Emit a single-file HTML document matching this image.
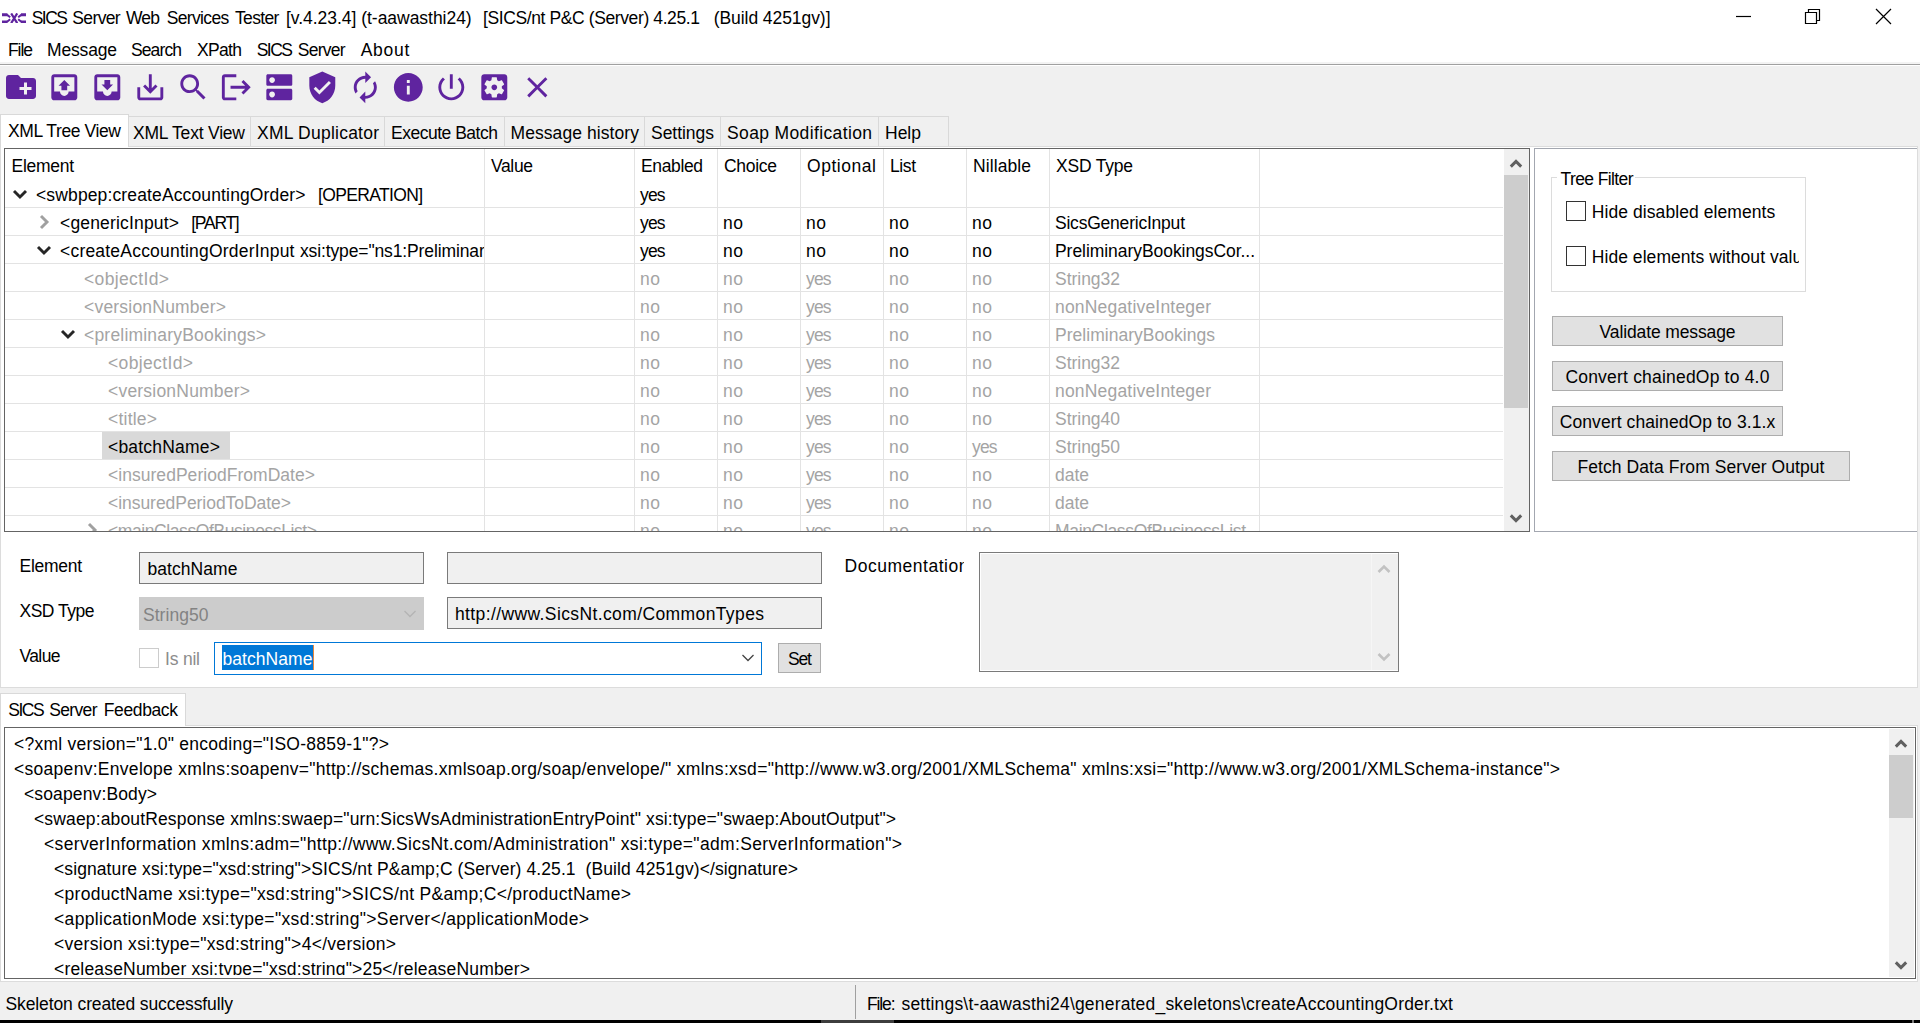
<!DOCTYPE html>
<html lang="en"><head><meta charset="utf-8"><title>SICS Server Web Services Tester</title>
<style>
html,body{margin:0;padding:0}
body{width:1920px;height:1023px;position:relative;overflow:hidden;background:#f0f0f0;font-family:"Liberation Sans",sans-serif;font-size:17.5px;line-height:20px;color:#000}
.a{position:absolute}
.t{position:absolute;white-space:pre;height:20px}
.hl{position:absolute;height:1px;background:#e3e3e3}
.vl{position:absolute;width:1px;background:#e3e3e3}
.btn{position:absolute;box-sizing:border-box;height:30px;background:#e1e1e1;border:1px solid #adadad;text-align:center;line-height:31px;white-space:pre;overflow:hidden}
.tab{position:absolute;box-sizing:border-box;border:1px solid #d9d9d9;border-bottom:none;background:#f0f0f0}
.inp{position:absolute;box-sizing:border-box;border:1px solid #7a7a7a;background:#f0f0f0}
</style></head><body>
<div class="a" style="left:0;top:0;width:1920px;height:64px;background:#fff"></div>
<div class="a" style="left:0;top:62px;width:1920px;height:2px;background:#f3f3f3"></div>
<div class="a" style="left:0;top:64px;width:1920px;height:1px;background:#a0a0a0"></div>
<div class="a" style="left:0;top:65px;width:1920px;height:1px;background:#fff"></div>
<svg class="a" style="left:2px;top:12.6px" width="24.4" height="10.6" viewBox="0 0 24.4 10.6"><g fill="none" stroke="#5f249f"><path stroke-width="2.9" d="M0 1.7h5.4M0 8.9h5.4M24.4 1.7h-5.4M24.4 8.9h-5.4"/><path stroke-width="2" d="M4.8 1.6l3.4 2.7M4.8 9l3.4-2.7M19.6 1.6l-3.4 2.7M19.6 9l-3.4-2.7"/><path d="M9.2 0.4l6 9.8M15.2 0.4l-6 9.8" stroke-width="2.2"/></g></svg>
<svg class="a" style="left:1730px;top:4px" width="170" height="26" viewBox="0 0 170 26"><g fill="none" stroke="#000" stroke-width="1.2"><path d="M6 12.5h15"/><path d="M75.5 8.5h11v11h-11zM78.5 8.5v-3h11v11h-3"/><path d="M146 5l15 15M161 5l-15 15"/></g></svg>
<svg class="a" style="left:3.00px;top:69.00px" width="36" height="36" viewBox="0 0 24 24"><path fill="#5f249f" d="M20 6h-8l-2-2H4c-1.11 0-1.99.89-1.99 2L2 18c0 1.11.89 2 2 2h16c1.11 0 2-.89 2-2V8c0-1.11-.89-2-2-2zm-1 8h-3v3h-2v-3h-3v-2h3V9h2v3h3v2z"/></svg>
<svg class="a" style="left:46.70px;top:69.70px" width="34.6" height="34.6" viewBox="0 0 24 24"><path fill="#5f249f" d="M19 3H4.99c-1.11 0-1.98.9-1.98 2L3 19c0 1.1.88 2 1.99 2H19c1.1 0 2-.9 2-2V5c0-1.1-.9-2-2-2zm0 12h-4c0 1.66-1.35 3-3 3s-3-1.34-3-3H4.99V5H19v10zM8 11h2v3h4v-3h2l-4-4-4 4z"/></svg>
<svg class="a" style="left:89.70px;top:69.70px" width="34.6" height="34.6" viewBox="0 0 24 24"><path fill="#5f249f" d="M19 3H4.99c-1.11 0-1.98.9-1.98 2L3 19c0 1.1.88 2 1.99 2H19c1.1 0 2-.9 2-2V5c0-1.1-.9-2-2-2zm0 12h-4c0 1.66-1.35 3-3 3s-3-1.34-3-3H4.99V5H19v10zm-3-5h-2V7h-4v3H8l4 4 4-4z"/></svg>
<svg class="a" style="left:132.70px;top:69.70px" width="34.6" height="34.6" viewBox="0 0 24 24"><path fill="#5f249f" d="M19 12v7H5v-7H3v7c0 1.1.9 2 2 2h14c1.1 0 2-.9 2-2v-7h-2zm-6 .67l2.59-2.58L17 11.5l-5 5-5-5 1.41-1.41L11 12.67V3h2z"/></svg>
<svg class="a" style="left:175.70px;top:69.70px" width="34.6" height="34.6" viewBox="0 0 24 24"><path fill="#5f249f" d="M15.5 14h-.79l-.28-.27C15.41 12.59 16 11.11 16 9.5 16 5.91 13.09 3 9.5 3S3 5.91 3 9.5 5.91 16 9.5 16c1.61 0 3.09-.59 4.23-1.57l.27.28v.79l5 4.99L20.49 19l-4.99-5zm-6 0C7.01 14 5 11.99 5 9.5S7.01 5 9.5 5 14 7.01 14 9.5 11.99 14 9.5 14z"/></svg>
<svg class="a" style="left:218.70px;top:69.70px" width="34.6" height="34.6" viewBox="0 0 24 24"><path fill="#5f249f" d="M17 7l-1.41 1.41L18.17 11H8v2h10.17l-2.58 2.58L17 17l5-5zM4 5h8V3H4c-1.1 0-2 .9-2 2v14c0 1.1.9 2 2 2h8v-2H4V5z"/></svg>
<svg class="a" style="left:261.70px;top:69.70px" width="34.6" height="34.6" viewBox="0 0 24 24"><path fill="#5f249f" d="M20 13H4c-.55 0-1 .45-1 1v6c0 .55.45 1 1 1h16c.55 0 1-.45 1-1v-6c0-.55-.45-1-1-1zM7 19c-1.1 0-2-.9-2-2s.9-2 2-2 2 .9 2 2-.9 2-2 2zM20 3H4c-.55 0-1 .45-1 1v6c0 .55.45 1 1 1h16c.55 0 1-.45 1-1V4c0-.55-.45-1-1-1zM7 9c-1.1 0-2-.9-2-2s.9-2 2-2 2 .9 2 2-.9 2-2 2z"/></svg>
<svg class="a" style="left:304.70px;top:69.70px" width="34.6" height="34.6" viewBox="0 0 24 24"><path fill="#5f249f" d="M12 1L3 5v6c0 5.55 3.84 10.74 9 12 5.16-1.26 9-6.45 9-12V5l-9-4zm-2 16l-4-4 1.41-1.41L10 14.17l6.59-6.59L18 9l-8 8z"/></svg>
<svg class="a" style="left:347.70px;top:69.70px" width="34.6" height="34.6" viewBox="0 0 24 24"><path fill="#5f249f" d="M12 6v3l4-4-4-4v3c-4.42 0-8 3.58-8 8 0 1.57.46 3.03 1.24 4.26L6.7 14.8c-.45-.83-.7-1.79-.7-2.8 0-3.31 2.69-6 6-6zm6.76 1.74L17.3 9.2c.44.84.7 1.79.7 2.8 0 3.31-2.69 6-6 6v-3l-4 4 4 4v-3c4.42 0 8-3.58 8-8 0-1.57-.46-3.03-1.24-4.26z"/></svg>
<svg class="a" style="left:390.70px;top:69.70px" width="34.6" height="34.6" viewBox="0 0 24 24"><path fill="#5f249f" d="M12 2C6.48 2 2 6.48 2 12s4.48 10 10 10 10-4.48 10-10S17.52 2 12 2zm1 15h-2v-6h2v6zm0-8h-2V7h2v2z"/></svg>
<svg class="a" style="left:433.70px;top:69.70px" width="34.6" height="34.6" viewBox="0 0 24 24"><path fill="#5f249f" d="M13 3h-2v10h2V3zm4.83 2.17l-1.42 1.42C17.99 7.86 19 9.81 19 12c0 3.87-3.13 7-7 7s-7-3.13-7-7c0-2.19 1.01-4.14 2.58-5.42L6.17 5.17C4.23 6.82 3 9.26 3 12c0 4.97 4.03 9 9 9s9-4.03 9-9c0-2.74-1.23-5.18-3.17-6.83z"/></svg>
<svg class="a" style="left:476.70px;top:69.70px" width="34.6" height="34.6" viewBox="0 0 24 24"><path fill="#5f249f" d="M12 10c-1.1 0-2 .9-2 2s.9 2 2 2 2-.9 2-2-.9-2-2-2zm7-7H5c-1.11 0-2 .9-2 2v14c0 1.1.89 2 2 2h14c1.11 0 2-.9 2-2V5c0-1.1-.89-2-2-2zm-1.75 9c0 .23-.02.46-.05.68l1.48 1.16c.13.11.17.3.08.45l-1.4 2.42c-.09.15-.27.21-.43.15l-1.74-.7c-.36.28-.76.51-1.18.69l-.26 1.85c-.03.17-.18.3-.35.3h-2.8c-.17 0-.32-.13-.35-.29l-.26-1.85c-.43-.18-.82-.41-1.18-.69l-1.74.7c-.16.06-.34 0-.43-.15l-1.4-2.42c-.09-.15-.05-.34.08-.45l1.48-1.16c-.03-.23-.05-.46-.05-.69 0-.23.02-.46.05-.68l-1.48-1.16c-.13-.11-.17-.3-.08-.45l1.4-2.42c.09-.15.27-.21.43-.15l1.74.7c.36-.28.76-.51 1.18-.69l.26-1.85c.03-.17.18-.3.35-.3h2.8c.17 0 .32.13.35.29l.26 1.85c.43.18.82.41 1.18.69l1.74-.7c.16-.06.34 0 .43.15l1.4 2.42c.09.15.05.34-.08.45l-1.48 1.16c.03.23.05.46.05.69z"/></svg>
<svg class="a" style="left:519.70px;top:69.70px" width="34.6" height="34.6" viewBox="0 0 24 24"><path fill="#5f249f" d="M19 6.41L17.59 5 12 10.59 6.41 5 5 6.41 10.59 12 5 17.59 6.41 19 12 13.41 17.59 19 19 17.59 13.41 12z"/></svg>
<div class="a" style="left:0;top:146px;width:1918px;height:542px;box-sizing:border-box;border:1px solid #dcdcdc;background:#fff"></div>
<div class="tab" style="left:0;top:114px;width:129px;height:33px;background:#fff;z-index:2"></div>
<div class="tab" style="left:129px;top:116px;width:122px;height:30px;border-left:none"></div>
<div class="tab" style="left:251px;top:116px;width:134px;height:30px;border-left:none"></div>
<div class="tab" style="left:385px;top:116px;width:120px;height:30px;border-left:none"></div>
<div class="tab" style="left:505px;top:116px;width:140px;height:30px;border-left:none"></div>
<div class="tab" style="left:645px;top:116px;width:76px;height:30px;border-left:none"></div>
<div class="tab" style="left:721px;top:116px;width:158px;height:30px;border-left:none"></div>
<div class="tab" style="left:879px;top:116px;width:70px;height:30px;border-left:none"></div>
<div class="a" style="left:4px;top:148px;width:1526px;height:384px;box-sizing:border-box;border:1px solid #646464;background:#fff;overflow:hidden;z-index:1" id="tree">
<div class="a" style="left:1499px;top:0;width:25px;height:382px;background:#f0f0f0"></div>
<div class="a" style="left:1499px;top:26px;width:24px;height:233px;background:#cdcdcd"></div>
<svg class="a" style="left:1499px;top:0px" width="24" height="26" viewBox="0 0 24 26"><path d="M6.8 17.6l5.2-5.2 5.2 5.2" fill="none" stroke="#606060" stroke-width="3"/></svg>
<svg class="a" style="left:1499px;top:357px" width="24" height="26" viewBox="0 0 24 26"><path d="M6.8 9.4l5.2 5.2 5.2-5.2" fill="none" stroke="#606060" stroke-width="3"/></svg>
<div class="a" style="left:97px;top:283px;width:128px;height:27px;background:#d9d9d9"></div>
<div class="hl" style="left:0;top:58px;width:1498px"></div>
<div class="hl" style="left:0;top:86px;width:1498px"></div>
<div class="hl" style="left:0;top:114px;width:1498px"></div>
<div class="hl" style="left:0;top:142px;width:1498px"></div>
<div class="hl" style="left:0;top:170px;width:1498px"></div>
<div class="hl" style="left:0;top:198px;width:1498px"></div>
<div class="hl" style="left:0;top:226px;width:1498px"></div>
<div class="hl" style="left:0;top:254px;width:1498px"></div>
<div class="hl" style="left:0;top:282px;width:1498px"></div>
<div class="hl" style="left:0;top:310px;width:1498px"></div>
<div class="hl" style="left:0;top:338px;width:1498px"></div>
<div class="hl" style="left:0;top:366px;width:1498px"></div>
<div class="vl" style="left:479px;top:0;height:382px"></div>
<div class="vl" style="left:629px;top:0;height:382px"></div>
<div class="vl" style="left:712px;top:0;height:382px"></div>
<div class="vl" style="left:795px;top:0;height:382px"></div>
<div class="vl" style="left:878px;top:0;height:382px"></div>
<div class="vl" style="left:961px;top:0;height:382px"></div>
<div class="vl" style="left:1044px;top:0;height:382px"></div>
<div class="vl" style="left:1254px;top:0;height:382px"></div>
<svg class="a" style="left:6.5px;top:37px" width="16" height="16" viewBox="0 0 16 16"><path d="M2 5l6 6 6-6" fill="none" stroke="#262626" stroke-width="2.9"/></svg>
<svg class="a" style="left:30.8px;top:65px" width="16" height="16" viewBox="0 0 16 16"><path d="M5 2l6 6-6 6" fill="none" stroke="#a0a0a0" stroke-width="2.9"/></svg>
<svg class="a" style="left:30.8px;top:93px" width="16" height="16" viewBox="0 0 16 16"><path d="M2 5l6 6 6-6" fill="none" stroke="#262626" stroke-width="2.9"/></svg>
<svg class="a" style="left:55.1px;top:177px" width="16" height="16" viewBox="0 0 16 16"><path d="M2 5l6 6 6-6" fill="none" stroke="#262626" stroke-width="2.9"/></svg>
<svg class="a" style="left:79.4px;top:373px" width="16" height="16" viewBox="0 0 16 16"><path d="M5 2l6 6-6 6" fill="none" stroke="#a0a0a0" stroke-width="2.9"/></svg>
<span class="t" id="t23" style="left:6.50px;top:7.00px;letter-spacing:-0.284px;">Element</span>
<span class="t" id="t24" style="left:486.00px;top:7.00px;letter-spacing:-0.367px;">Value</span>
<span class="t" id="t25" style="left:636.00px;top:7.00px;letter-spacing:-0.372px;">Enabled</span>
<span class="t" id="t26" style="left:719.00px;top:7.00px;letter-spacing:-0.297px;">Choice</span>
<span class="t" id="t27" style="left:802.00px;top:7.00px;letter-spacing:0.545px;">Optional</span>
<span class="t" id="t28" style="left:885.00px;top:7.00px;letter-spacing:-0.411px;">List</span>
<span class="t" id="t29" style="left:968.00px;top:7.00px;letter-spacing:0.087px;">Nillable</span>
<span class="t" id="t30" style="left:1051.00px;top:7.00px;letter-spacing:-0.210px;">XSD Type</span>
<span class="t" id="t31" style="left:31.00px;top:35.75px;letter-spacing:0.135px;">&lt;swbpep:createAccountingOrder&gt;</span>
<span class="t" id="t32" style="left:313.00px;top:35.75px;letter-spacing:-0.650px;">[OPERATION]</span>
<span class="t" id="t33" style="left:635.00px;top:35.75px;letter-spacing:-0.867px;">yes</span>
<span class="t" id="t34" style="left:55.00px;top:63.75px;letter-spacing:0.172px;">&lt;genericInput&gt;</span>
<span class="t" id="t35" style="left:186.25px;top:63.75px;letter-spacing:-1.259px;">[PART]</span>
<span class="t" id="t36" style="left:635.00px;top:63.75px;letter-spacing:-0.867px;">yes</span>
<span class="t" id="t37" style="left:718.00px;top:63.75px;letter-spacing:0.531px;">no</span>
<span class="t" id="t38" style="left:801.00px;top:63.75px;letter-spacing:0.531px;">no</span>
<span class="t" id="t39" style="left:884.00px;top:63.75px;letter-spacing:0.531px;">no</span>
<span class="t" id="t40" style="left:967.00px;top:63.75px;letter-spacing:0.531px;">no</span>
<span class="t" id="t41" style="left:1050.00px;top:63.75px;letter-spacing:-0.218px;">SicsGenericInput</span>
<span class="t" id="t42" style="left:55.00px;top:91.75px;letter-spacing:0.207px;">&lt;createAccountingOrderInput</span>
<span class="t" id="t43" style="left:295.00px;top:91.75px;letter-spacing:-0.126px;width:184px;overflow:hidden;">xsi:type=&quot;ns1:PreliminaryBookingsCore&quot;</span>
<span class="t" id="t44" style="left:635.00px;top:91.75px;letter-spacing:-0.867px;">yes</span>
<span class="t" id="t45" style="left:718.00px;top:91.75px;letter-spacing:0.531px;">no</span>
<span class="t" id="t46" style="left:801.00px;top:91.75px;letter-spacing:0.531px;">no</span>
<span class="t" id="t47" style="left:884.00px;top:91.75px;letter-spacing:0.531px;">no</span>
<span class="t" id="t48" style="left:967.00px;top:91.75px;letter-spacing:0.531px;">no</span>
<span class="t" id="t49" style="left:1050.00px;top:91.75px;letter-spacing:-0.055px;">PreliminaryBookingsCor...</span>
<span class="t" id="t50" style="left:79.00px;top:119.75px;color:#a4a4a4;letter-spacing:0.363px;">&lt;objectId&gt;</span>
<span class="t" id="t51" style="left:635.00px;top:119.75px;color:#a4a4a4;letter-spacing:0.531px;">no</span>
<span class="t" id="t52" style="left:718.00px;top:119.75px;color:#a4a4a4;letter-spacing:0.531px;">no</span>
<span class="t" id="t53" style="left:801.00px;top:119.75px;color:#a4a4a4;letter-spacing:-0.867px;">yes</span>
<span class="t" id="t54" style="left:884.00px;top:119.75px;color:#a4a4a4;letter-spacing:0.531px;">no</span>
<span class="t" id="t55" style="left:967.00px;top:119.75px;color:#a4a4a4;letter-spacing:0.531px;">no</span>
<span class="t" id="t56" style="left:1050.00px;top:119.75px;color:#a4a4a4;letter-spacing:-0.027px;">String32</span>
<span class="t" id="t57" style="left:79.00px;top:147.75px;color:#a4a4a4;letter-spacing:0.206px;">&lt;versionNumber&gt;</span>
<span class="t" id="t58" style="left:635.00px;top:147.75px;color:#a4a4a4;letter-spacing:0.531px;">no</span>
<span class="t" id="t59" style="left:718.00px;top:147.75px;color:#a4a4a4;letter-spacing:0.531px;">no</span>
<span class="t" id="t60" style="left:801.00px;top:147.75px;color:#a4a4a4;letter-spacing:-0.867px;">yes</span>
<span class="t" id="t61" style="left:884.00px;top:147.75px;color:#a4a4a4;letter-spacing:0.531px;">no</span>
<span class="t" id="t62" style="left:967.00px;top:147.75px;color:#a4a4a4;letter-spacing:0.531px;">no</span>
<span class="t" id="t63" style="left:1050.00px;top:147.75px;color:#a4a4a4;letter-spacing:0.191px;">nonNegativeInteger</span>
<span class="t" id="t64" style="left:79.00px;top:175.75px;color:#a4a4a4;letter-spacing:0.199px;">&lt;preliminaryBookings&gt;</span>
<span class="t" id="t65" style="left:635.00px;top:175.75px;color:#a4a4a4;letter-spacing:0.531px;">no</span>
<span class="t" id="t66" style="left:718.00px;top:175.75px;color:#a4a4a4;letter-spacing:0.531px;">no</span>
<span class="t" id="t67" style="left:801.00px;top:175.75px;color:#a4a4a4;letter-spacing:-0.867px;">yes</span>
<span class="t" id="t68" style="left:884.00px;top:175.75px;color:#a4a4a4;letter-spacing:0.531px;">no</span>
<span class="t" id="t69" style="left:967.00px;top:175.75px;color:#a4a4a4;letter-spacing:0.531px;">no</span>
<span class="t" id="t70" style="left:1050.00px;top:175.75px;color:#a4a4a4;letter-spacing:0.027px;">PreliminaryBookings</span>
<span class="t" id="t71" style="left:103.00px;top:203.75px;color:#a4a4a4;letter-spacing:0.363px;">&lt;objectId&gt;</span>
<span class="t" id="t72" style="left:635.00px;top:203.75px;color:#a4a4a4;letter-spacing:0.531px;">no</span>
<span class="t" id="t73" style="left:718.00px;top:203.75px;color:#a4a4a4;letter-spacing:0.531px;">no</span>
<span class="t" id="t74" style="left:801.00px;top:203.75px;color:#a4a4a4;letter-spacing:-0.867px;">yes</span>
<span class="t" id="t75" style="left:884.00px;top:203.75px;color:#a4a4a4;letter-spacing:0.531px;">no</span>
<span class="t" id="t76" style="left:967.00px;top:203.75px;color:#a4a4a4;letter-spacing:0.531px;">no</span>
<span class="t" id="t77" style="left:1050.00px;top:203.75px;color:#a4a4a4;letter-spacing:-0.027px;">String32</span>
<span class="t" id="t78" style="left:103.00px;top:231.75px;color:#a4a4a4;letter-spacing:0.206px;">&lt;versionNumber&gt;</span>
<span class="t" id="t79" style="left:635.00px;top:231.75px;color:#a4a4a4;letter-spacing:0.531px;">no</span>
<span class="t" id="t80" style="left:718.00px;top:231.75px;color:#a4a4a4;letter-spacing:0.531px;">no</span>
<span class="t" id="t81" style="left:801.00px;top:231.75px;color:#a4a4a4;letter-spacing:-0.867px;">yes</span>
<span class="t" id="t82" style="left:884.00px;top:231.75px;color:#a4a4a4;letter-spacing:0.531px;">no</span>
<span class="t" id="t83" style="left:967.00px;top:231.75px;color:#a4a4a4;letter-spacing:0.531px;">no</span>
<span class="t" id="t84" style="left:1050.00px;top:231.75px;color:#a4a4a4;letter-spacing:0.191px;">nonNegativeInteger</span>
<span class="t" id="t85" style="left:103.00px;top:259.75px;color:#a4a4a4;letter-spacing:0.219px;">&lt;title&gt;</span>
<span class="t" id="t86" style="left:635.00px;top:259.75px;color:#a4a4a4;letter-spacing:0.531px;">no</span>
<span class="t" id="t87" style="left:718.00px;top:259.75px;color:#a4a4a4;letter-spacing:0.531px;">no</span>
<span class="t" id="t88" style="left:801.00px;top:259.75px;color:#a4a4a4;letter-spacing:-0.867px;">yes</span>
<span class="t" id="t89" style="left:884.00px;top:259.75px;color:#a4a4a4;letter-spacing:0.531px;">no</span>
<span class="t" id="t90" style="left:967.00px;top:259.75px;color:#a4a4a4;letter-spacing:0.531px;">no</span>
<span class="t" id="t91" style="left:1050.00px;top:259.75px;color:#a4a4a4;letter-spacing:-0.027px;">String40</span>
<span class="t" id="t92" style="left:103.00px;top:287.75px;letter-spacing:0.206px;">&lt;batchName&gt;</span>
<span class="t" id="t93" style="left:635.00px;top:287.75px;color:#a4a4a4;letter-spacing:0.531px;">no</span>
<span class="t" id="t94" style="left:718.00px;top:287.75px;color:#a4a4a4;letter-spacing:0.531px;">no</span>
<span class="t" id="t95" style="left:801.00px;top:287.75px;color:#a4a4a4;letter-spacing:-0.867px;">yes</span>
<span class="t" id="t96" style="left:884.00px;top:287.75px;color:#a4a4a4;letter-spacing:0.531px;">no</span>
<span class="t" id="t97" style="left:967.00px;top:287.75px;color:#a4a4a4;letter-spacing:-0.867px;">yes</span>
<span class="t" id="t98" style="left:1050.00px;top:287.75px;color:#a4a4a4;letter-spacing:-0.027px;">String50</span>
<span class="t" id="t99" style="left:103.00px;top:315.75px;color:#a4a4a4;letter-spacing:0.036px;">&lt;insuredPeriodFromDate&gt;</span>
<span class="t" id="t100" style="left:635.00px;top:315.75px;color:#a4a4a4;letter-spacing:0.531px;">no</span>
<span class="t" id="t101" style="left:718.00px;top:315.75px;color:#a4a4a4;letter-spacing:0.531px;">no</span>
<span class="t" id="t102" style="left:801.00px;top:315.75px;color:#a4a4a4;letter-spacing:-0.867px;">yes</span>
<span class="t" id="t103" style="left:884.00px;top:315.75px;color:#a4a4a4;letter-spacing:0.531px;">no</span>
<span class="t" id="t104" style="left:967.00px;top:315.75px;color:#a4a4a4;letter-spacing:0.531px;">no</span>
<span class="t" id="t105" style="left:1050.00px;top:315.75px;color:#a4a4a4;letter-spacing:-0.021px;">date</span>
<span class="t" id="t106" style="left:103.00px;top:343.75px;color:#a4a4a4;letter-spacing:-0.044px;">&lt;insuredPeriodToDate&gt;</span>
<span class="t" id="t107" style="left:635.00px;top:343.75px;color:#a4a4a4;letter-spacing:0.531px;">no</span>
<span class="t" id="t108" style="left:718.00px;top:343.75px;color:#a4a4a4;letter-spacing:0.531px;">no</span>
<span class="t" id="t109" style="left:801.00px;top:343.75px;color:#a4a4a4;letter-spacing:-0.867px;">yes</span>
<span class="t" id="t110" style="left:884.00px;top:343.75px;color:#a4a4a4;letter-spacing:0.531px;">no</span>
<span class="t" id="t111" style="left:967.00px;top:343.75px;color:#a4a4a4;letter-spacing:0.531px;">no</span>
<span class="t" id="t112" style="left:1050.00px;top:343.75px;color:#a4a4a4;letter-spacing:-0.021px;">date</span>
<span class="t" id="t113" style="left:103.00px;top:371.75px;color:#a4a4a4;letter-spacing:-0.411px;">&lt;mainClassOfBusinessList&gt;</span>
<span class="t" id="t114" style="left:635.00px;top:371.75px;color:#a4a4a4;letter-spacing:0.531px;">no</span>
<span class="t" id="t115" style="left:718.00px;top:371.75px;color:#a4a4a4;letter-spacing:0.531px;">no</span>
<span class="t" id="t116" style="left:801.00px;top:371.75px;color:#a4a4a4;letter-spacing:-0.867px;">yes</span>
<span class="t" id="t117" style="left:884.00px;top:371.75px;color:#a4a4a4;letter-spacing:0.531px;">no</span>
<span class="t" id="t118" style="left:967.00px;top:371.75px;color:#a4a4a4;letter-spacing:0.531px;">no</span>
<span class="t" id="t119" style="left:1050.00px;top:371.75px;color:#a4a4a4;letter-spacing:-0.337px;">MainClassOfBusinessList</span>
</div>
<div class="a" style="left:1534px;top:148px;width:383px;height:384px;box-sizing:border-box;border:1px solid #a3a7b0;border-right:none;background:#fff"></div>
<div class="a" style="left:1551px;top:177px;width:255px;height:115px;box-sizing:border-box;border:1px solid #dcdcdc"></div>
<div class="a" style="left:1566px;top:201px;width:20px;height:20px;box-sizing:border-box;border:1px solid #333;background:#fff"></div>
<div class="a" style="left:1566px;top:246px;width:20px;height:20px;box-sizing:border-box;border:1px solid #333;background:#fff"></div>
<div class="inp" style="left:139px;top:552px;width:285px;height:32px"></div>
<div class="inp" style="left:447px;top:552px;width:375px;height:32px"></div>
<div class="a" style="left:139px;top:597px;width:285px;height:33px;background:#ccc"></div>
<svg class="a" style="left:402px;top:607px" width="16" height="14" viewBox="0 0 16 14"><path d="M2.5 4l5.5 5.5 5.5-5.5" fill="none" stroke="#b4b4b4" stroke-width="1.3"/></svg>
<div class="inp" style="left:447px;top:597px;width:375px;height:32px"></div>
<div class="a" style="left:139px;top:648px;width:20px;height:20px;box-sizing:border-box;border:1px solid #ccc;background:#fff"></div>
<div class="a" style="left:214px;top:642px;width:548px;height:33px;box-sizing:border-box;border:1px solid #0078d7;background:#fff"></div>
<div class="a" style="left:222px;top:645px;width:91px;height:25px;background:#0078d7"></div>
<div class="a" style="left:313px;top:645px;width:1px;height:25px;background:#e8873a"></div>
<svg class="a" style="left:740px;top:651px" width="16" height="14" viewBox="0 0 16 14"><path d="M2.5 4l5.5 5.5 5.5-5.5" fill="none" stroke="#444" stroke-width="1.3"/></svg>
<div class="btn" style="left:778px;top:643px;width:43px"></div>
<div class="inp" style="left:979px;top:552px;width:420px;height:120px;box-shadow:inset 0 0 0 1px #fff"></div>
<div class="a" style="left:1371px;top:554px;width:26px;height:116px;background:#f0f0f0;border-left:1px solid #f6f6f6"></div>
<svg class="a" style="left:1376px;top:562px" width="16" height="14" viewBox="0 0 16 14"><path d="M2.5 10l5.5-5.5 5.5 5.5" fill="none" stroke="#c2c2c2" stroke-width="2.6"/></svg>
<svg class="a" style="left:1376px;top:650px" width="16" height="14" viewBox="0 0 16 14"><path d="M2.5 4l5.5 5.5 5.5-5.5" fill="none" stroke="#c2c2c2" stroke-width="2.6"/></svg>
<div class="a" style="left:0;top:725px;width:1918px;height:257px;box-sizing:border-box;border:1px solid #dcdcdc;background:#fff"></div>
<div class="tab" style="left:0;top:693px;width:186px;height:33px;background:#fff;z-index:2"></div>
<div class="a" style="left:4px;top:727px;width:1912px;height:252px;box-sizing:border-box;border:1px solid #646464;background:#fff;overflow:hidden;z-index:3" id="fb">
<div class="a" style="left:1884px;top:1px;width:24.5px;height:247.5px;background:#f0f0f0"></div>
<div class="a" style="left:1884px;top:27px;width:24px;height:63px;background:#cdcdcd"></div>
<svg class="a" style="left:1884px;top:1px" width="24" height="26" viewBox="0 0 24 26"><path d="M6.8 17.6l5.2-5.2 5.2 5.2" fill="none" stroke="#606060" stroke-width="3"/></svg>
<svg class="a" style="left:1884px;top:224.5px" width="24" height="26" viewBox="0 0 24 26"><path d="M6.8 9.4l5.2 5.2 5.2-5.2" fill="none" stroke="#606060" stroke-width="3"/></svg>
<div class="a" style="left:0;top:0;width:1884px;height:247px;overflow:hidden"><span class="t" id="t140" style="left:9.00px;top:6.25px;letter-spacing:0.253px;">&lt;?xml version=&quot;1.0&quot; encoding=&quot;ISO-8859-1&quot;?&gt;</span>
<span class="t" id="t141" style="left:9.00px;top:31.25px;letter-spacing:0.288px;">&lt;soapenv:Envelope xmlns:soapenv=&quot;http://schemas.xmlsoap.org/soap/envelope/&quot; xmlns:xsd=&quot;http://www.w3.org/2001/XMLSchema&quot; xmlns:xsi=&quot;http://www.w3.org/2001/XMLSchema-instance&quot;&gt;</span>
<span class="t" id="t142" style="left:19.00px;top:56.25px;letter-spacing:0.126px;">&lt;soapenv:Body&gt;</span>
<span class="t" id="t143" style="left:29.00px;top:81.25px;letter-spacing:0.145px;">&lt;swaep:aboutResponse xmlns:swaep=&quot;urn:SicsWsAdministrationEntryPoint&quot; xsi:type=&quot;swaep:AboutOutput&quot;&gt;</span>
<span class="t" id="t144" style="left:39.00px;top:106.25px;letter-spacing:0.346px;">&lt;serverInformation xmlns:adm=&quot;http://www.SicsNt.com/Administration&quot; xsi:type=&quot;adm:ServerInformation&quot;&gt;</span>
<span class="t" id="t145" style="left:49.00px;top:131.25px;letter-spacing:0.092px;">&lt;signature xsi:type=&quot;xsd:string&quot;&gt;SICS/nt P&amp;amp;C (Server) 4.25.1  (Build 4251gv)&lt;/signature&gt;</span>
<span class="t" id="t146" style="left:49.00px;top:156.25px;letter-spacing:0.308px;">&lt;productName xsi:type=&quot;xsd:string&quot;&gt;SICS/nt P&amp;amp;C&lt;/productName&gt;</span>
<span class="t" id="t147" style="left:49.00px;top:181.25px;letter-spacing:0.340px;">&lt;applicationMode xsi:type=&quot;xsd:string&quot;&gt;Server&lt;/applicationMode&gt;</span>
<span class="t" id="t148" style="left:49.00px;top:206.25px;letter-spacing:0.292px;">&lt;version xsi:type=&quot;xsd:string&quot;&gt;4&lt;/version&gt;</span>
<span class="t" id="t149" style="left:49.00px;top:231.25px;letter-spacing:0.181px;">&lt;releaseNumber xsi:type=&quot;xsd:string&quot;&gt;25&lt;/releaseNumber&gt;</span>
</div></div>
<div class="a" style="left:855px;top:985px;width:1px;height:34px;background:#a0a0a0"></div>
<div class="a" style="left:0;top:1020px;width:1920px;height:3px;background:#000"></div>
<div class="a" style="left:821px;top:1020px;width:73px;height:3px;background:#3d3d3d"></div>
<div class="a" style="left:1912px;top:1020px;width:2px;height:3px;background:#7a7a7a"></div>
<span class="t" id="t0" style="left:31.70px;top:7.50px;z-index:5;letter-spacing:-1.500px;">SICS</span>
<span class="t" id="t1" style="left:72.30px;top:7.50px;z-index:5;letter-spacing:-0.629px;">Server</span>
<span class="t" id="t2" style="left:126.00px;top:7.50px;z-index:5;letter-spacing:-0.836px;">Web</span>
<span class="t" id="t3" style="left:166.70px;top:7.50px;z-index:5;letter-spacing:-0.644px;">Services</span>
<span class="t" id="t4" style="left:235.00px;top:7.50px;z-index:5;letter-spacing:-0.671px;">Tester</span>
<span class="t" id="t5" style="left:286.00px;top:7.50px;z-index:5;letter-spacing:-0.031px;">[v.4.23.4] (t-aawasthi24)</span>
<span class="t" id="t6" style="left:483.00px;top:7.50px;z-index:5;letter-spacing:-0.392px;">[SICS/nt P&amp;C (Server) 4.25.1</span>
<span class="t" id="t7" style="left:713.75px;top:7.50px;z-index:5;letter-spacing:-0.069px;">(Build 4251gv)]</span>
<span class="t" id="t8" style="left:8.00px;top:39.50px;z-index:5;letter-spacing:-1.068px;">File</span>
<span class="t" id="t9" style="left:47.00px;top:39.50px;z-index:5;letter-spacing:-0.169px;">Message</span>
<span class="t" id="t10" style="left:131.00px;top:39.50px;z-index:5;letter-spacing:-0.891px;">Search</span>
<span class="t" id="t11" style="left:197.00px;top:39.50px;z-index:5;letter-spacing:-0.672px;">XPath</span>
<span class="t" id="t12" style="left:256.70px;top:39.50px;z-index:5;letter-spacing:-1.500px;">SICS</span>
<span class="t" id="t13" style="left:297.70px;top:39.50px;z-index:5;letter-spacing:-0.709px;">Server</span>
<span class="t" id="t14" style="left:360.70px;top:39.50px;z-index:5;letter-spacing:0.716px;">About</span>
<span class="t" id="t15" style="left:8.00px;top:120.75px;z-index:5;letter-spacing:-0.392px;">XML Tree View</span>
<span class="t" id="t16" style="left:133.00px;top:122.75px;z-index:5;letter-spacing:-0.204px;">XML Text View</span>
<span class="t" id="t17" style="left:257.00px;top:122.75px;z-index:5;letter-spacing:0.232px;">XML Duplicator</span>
<span class="t" id="t18" style="left:391.00px;top:122.75px;z-index:5;letter-spacing:-0.488px;">Execute Batch</span>
<span class="t" id="t19" style="left:510.50px;top:122.75px;z-index:5;letter-spacing:0.077px;">Message history</span>
<span class="t" id="t20" style="left:651.00px;top:122.75px;z-index:5;letter-spacing:-0.033px;">Settings</span>
<span class="t" id="t21" style="left:727.00px;top:122.75px;z-index:5;letter-spacing:0.367px;">Soap Modification</span>
<span class="t" id="t22" style="left:885.00px;top:122.75px;z-index:5;">Help</span>
<span class="t" id="t120" style="left:1560.50px;top:169.00px;z-index:5;letter-spacing:-0.609px;background:#fff;padding:0 2px 0 4px;margin-left:-4px;">Tree Filter</span>
<span class="t" id="t121" style="left:1591.75px;top:201.50px;z-index:5;letter-spacing:0.075px;">Hide disabled elements</span>
<span class="t" id="t122" style="left:1591.75px;top:246.50px;z-index:5;letter-spacing:0.054px;width:207px;overflow:hidden;">Hide elements without value</span>
<div class="btn" id="t123" style="left:1552px;top:316px;width:231px;letter-spacing:-0.121px;">Validate message</div>
<div class="btn" id="t124" style="left:1552px;top:361px;width:231px;letter-spacing:0.198px;">Convert chainedOp to 4.0</div>
<div class="btn" id="t125" style="left:1552px;top:406px;width:231px;letter-spacing:0.102px;">Convert chainedOp to 3.1.x</div>
<div class="btn" id="t126" style="left:1552px;top:451px;width:298px;letter-spacing:0.068px;">Fetch Data From Server Output</div>
<span class="t" id="t127" style="left:19.50px;top:556.00px;z-index:5;letter-spacing:-0.284px;">Element</span>
<span class="t" id="t128" style="left:19.50px;top:601.00px;z-index:5;letter-spacing:-0.496px;">XSD Type</span>
<span class="t" id="t129" style="left:19.50px;top:646.00px;z-index:5;letter-spacing:-0.617px;">Value</span>
<span class="t" id="t130" style="left:147.50px;top:558.50px;z-index:5;letter-spacing:0.062px;">batchName</span>
<span class="t" id="t131" style="left:143.00px;top:604.75px;z-index:5;color:#838383;letter-spacing:0.045px;">String50</span>
<span class="t" id="t132" style="left:455.00px;top:604.00px;z-index:5;letter-spacing:0.387px;">http://www.SicsNt.com/CommonTypes</span>
<span class="t" id="t133" style="left:165.00px;top:648.50px;z-index:5;color:#8c8c8c;letter-spacing:-0.197px;">Is nil</span>
<span class="t" id="t134" style="left:222.50px;top:648.50px;z-index:5;color:#fff;letter-spacing:0.062px;">batchName</span>
<span class="t" id="t135" style="left:788.00px;top:648.50px;z-index:5;letter-spacing:-1.141px;">Set</span>
<span class="t" id="t136" style="left:844.50px;top:556.00px;z-index:5;letter-spacing:0.523px;width:119px;overflow:hidden;">Documentation</span>
<span class="t" id="t137" style="left:8.25px;top:700.00px;z-index:5;letter-spacing:-1.500px;">SICS</span>
<span class="t" id="t138" style="left:49.25px;top:700.00px;z-index:5;letter-spacing:-0.659px;">Server</span>
<span class="t" id="t139" style="left:103.75px;top:700.00px;z-index:5;letter-spacing:-0.373px;">Feedback</span>
<span class="t" id="t150" style="left:5.50px;top:993.50px;z-index:5;letter-spacing:-0.109px;">Skeleton created successfully</span>
<span class="t" id="t151" style="left:867.00px;top:993.75px;z-index:5;letter-spacing:-1.116px;">File:</span>
<span class="t" id="t152" style="left:901.50px;top:993.75px;z-index:5;letter-spacing:0.190px;">settings\t-aawasthi24\generated_skeletons\createAccountingOrder.txt</span>
</body></html>
